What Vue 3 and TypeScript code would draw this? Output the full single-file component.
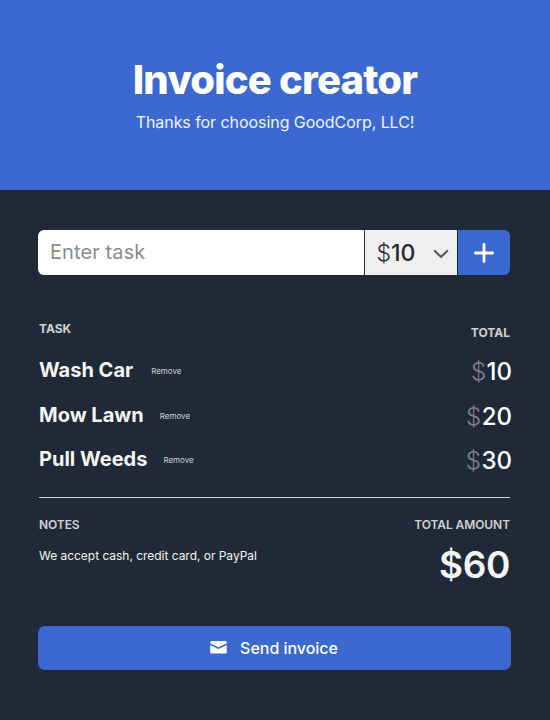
<script setup lang="ts">
import { computed, ref } from 'vue'

interface Task {
  id: number
  name: string
  price: number
}

const prices = [10, 20, 30]
const tasks = ref<Task[]>([
  { id: 1, name: 'Wash Car', price: 10 },
  { id: 2, name: 'Mow Lawn', price: 20 },
  { id: 3, name: 'Pull Weeds', price: 30 },
])
const draft = ref('')
const price = ref(10)
let nextId = 4

const total = computed(() => tasks.value.reduce((sum, t) => sum + t.price, 0))

function cyclePrice() {
  price.value = prices[(prices.indexOf(price.value) + 1) % prices.length]
}

function addTask() {
  const name = draft.value.trim()
  if (!name) return
  tasks.value.push({ id: nextId++, name, price: price.value })
  draft.value = ''
}

function removeTask(id: number) {
  tasks.value = tasks.value.filter((t) => t.id !== id)
}
</script>

<template>
  <div class="page">
    <header class="hero">
      <h1 class="title">Invoice creator</h1>
      <p class="subtitle">Thanks for choosing GoodCorp, LLC!</p>
    </header>

    <main class="content">
      <form class="entry" @submit.prevent="addTask">
        <input v-model="draft" class="task-input" type="text" placeholder="Enter task" />
        <button class="price" type="button" @click="cyclePrice">
          <span class="price-text"><span class="sign">$</span>{{ price }}</span>
          <svg class="chevron" width="16" height="10" viewBox="0 0 16 10">
            <path d="M1.800 2 8 8l6.200-6" fill="none" stroke="#5c5c5c" stroke-width="2.200" stroke-linecap="round" stroke-linejoin="round" />
          </svg>
        </button>
        <button class="add" type="submit" aria-label="Add task">
          <svg width="20" height="20" viewBox="0 0 20 20">
            <path d="M10 1.400v17.200M1.400 10h17.200" fill="none" stroke="#fff" stroke-width="2.800" stroke-linecap="round" />
          </svg>
        </button>
      </form>

      <div class="labels">
        <span class="label label-task">TASK</span>
        <span class="label label-total">TOTAL</span>
      </div>

      <ul class="tasks">
        <li v-for="task in tasks" :key="task.id" class="task">
          <span class="name">{{ task.name }}</span>
          <button class="remove" type="button" @click="removeTask(task.id)">Remove</button>
          <span class="amount"><span class="dollar">$</span>{{ task.price }}</span>
        </li>
      </ul>

      <section class="summary">
        <div class="notes">
          <h2 class="caption">NOTES</h2>
          <p class="note">We accept cash, credit card, or PayPal</p>
        </div>
        <div class="sum">
          <h2 class="caption">TOTAL AMOUNT</h2>
          <p class="grand">${{ total }}</p>
        </div>
      </section>

      <button class="send" type="button">
        <svg width="17" height="13" viewBox="0 0 17 13">
          <path d="M1.700 0h13.600A1.500 1.500 0 0 1 16.800 1.500v.7L8.500 6.200.2 2.200v-.7A1.500 1.500 0 0 1 1.700 0Z" fill="#fff" />
          <path d="M.2 4 8.500 8l8.300-4v7a1.500 1.500 0 0 1-1.500 1.500H1.700A1.500 1.500 0 0 1 .2 11Z" fill="#fff" />
        </svg>
        <span class="send-text">Send invoice</span>
      </button>
    </main>
  </div>
</template>

<style>
body {
  background: #1f2937;
}
</style>

<style scoped>
.page {
  width: 550px;
  height: 720px;
  overflow: hidden;
  background: #1f2937;
  font-family: Inter, 'Liberation Sans', sans-serif;
}

h1,
h2,
p,
ul {
  margin: 0;
  padding: 0;
}

button,
input {
  margin: 0;
  padding: 0;
  border: 0;
  font-family: inherit;
  cursor: pointer;
}

.hero {
  height: 190px;
  box-sizing: border-box;
  padding-top: 56px;
  background: #3b69d1;
  color: #fff;
  text-align: center;
}

.title {
  font-size: 40px;
  line-height: 48px;
  font-weight: 800;
  letter-spacing: -0.8px;
}

.subtitle {
  margin-top: 8px;
  font-size: 16px;
  line-height: 20px;
  letter-spacing: -0.06px;
  color: #f1f4fc;
}

.content {
  padding: 40px 39px 0 38px;
}

.entry {
  display: flex;
  gap: 1px;
  width: 472px;
  height: 45px;
}

.task-input {
  width: 326px;
  box-sizing: border-box;
  padding: 0 12px 2px;
  border-radius: 6px 0 0 6px;
  background: #fff;
  color: #1f2937;
  font-size: 20px;
  letter-spacing: 0.1px;
  outline: none;
  cursor: text;
}

.task-input::placeholder {
  color: #8c8c8c;
  opacity: 1;
}

.price {
  display: flex;
  align-items: center;
  justify-content: space-between;
  width: 92px;
  box-sizing: border-box;
  padding: 0 8px 0 11.5px;
  background: #efefef;
  color: #1f2937;
}

.price-text {
  font-size: 23px;
  line-height: 28px;
  font-weight: 500;
}

.sign {
  font-weight: 300;
}

.chevron {
  margin-top: 3px;
}

.add {
  display: flex;
  align-items: center;
  justify-content: center;
  width: 52px;
  border-radius: 0 6px 6px 0;
  background: #3b69d1;
}

.labels {
  display: flex;
  justify-content: space-between;
  margin-top: 46px;
  padding: 0 1px;
}

.label {
  font-size: 12px;
  line-height: 16px;
  font-weight: 700;
  color: #d1d1d3;
}

.label-total {
  margin-top: 4px;
}

.tasks {
  margin-top: 7px;
  list-style: none;
}

.task {
  display: flex;
  align-items: center;
  height: 44.5px;
  padding-left: 1px;
}

.name {
  margin-right: 16px;
  font-size: 20px;
  line-height: 24px;
  font-weight: 700;
  color: #f5f5f5;
}

.task:first-child .name {
  margin-right: 18px;
}

.remove {
  margin-top: 2px;
  background: none;
  color: #d1d1d3;
  font-size: 8px;
  line-height: 12px;
}

.task:last-child .remove {
  margin-top: 1px;
}

.amount {
  margin: 4px -1px 0 auto;
  font-size: 24px;
  line-height: 28px;
  font-weight: 500;
  color: #fff;
}

.dollar {
  margin-right: 0.5px;
  font-weight: 300;
  color: #857f90;
}

.summary {
  display: flex;
  justify-content: space-between;
  height: 129px;
  margin: 15px 1px 0;
  padding-top: 19px;
  border-top: 1px solid #d1d5db;
  box-sizing: border-box;
}

.caption {
  font-size: 12px;
  line-height: 16px;
  font-weight: 600;
  letter-spacing: -0.08px;
  color: #d1d1d3;
}

.note {
  margin-top: 15px;
  font-size: 12px;
  line-height: 16px;
  letter-spacing: -0.03px;
  color: #f5f5f5;
}

.sum {
  text-align: right;
}

.grand {
  margin-top: 9px;
  font-size: 37px;
  line-height: 46px;
  font-weight: 600;
  letter-spacing: -0.4px;
  color: #f5f5f5;
}

.send {
  display: flex;
  align-items: center;
  justify-content: center;
  gap: 13px;
  width: 473px;
  height: 44px;
  padding-right: 1px;
  box-sizing: border-box;
  border-radius: 7px;
  background: #3b69d1;
  color: #fff;
}

.send-text {
  font-size: 16px;
  line-height: 20px;
  font-weight: 500;
  letter-spacing: -0.03px;
}
</style>
